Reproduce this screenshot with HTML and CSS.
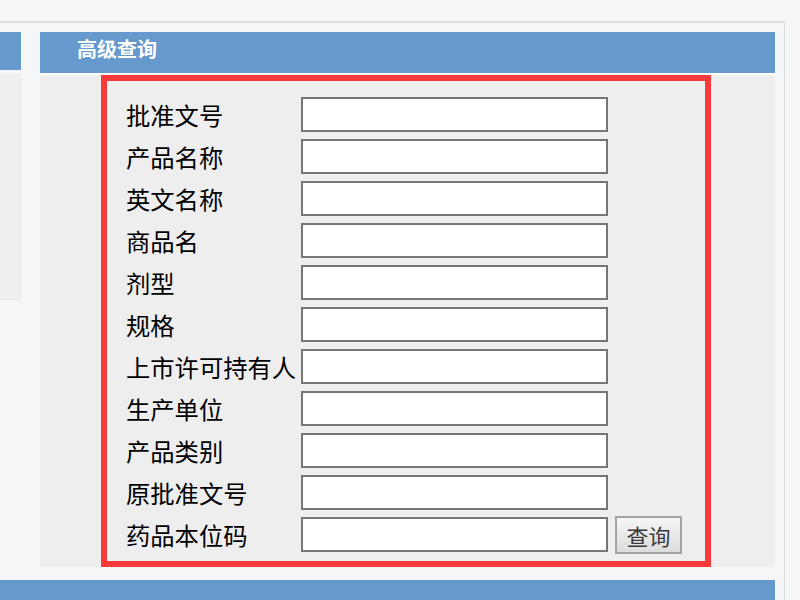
FILE: index.html
```html
<!DOCTYPE html>
<html lang="zh-CN">
<head>
<meta charset="utf-8">
<title>高级查询</title>
<link rel="stylesheet" href="styles.css">
</head>
<body>
<div class="frame">
  <div class="columns">
    <aside class="side">
      <div class="side-head"></div>
      <div class="side-body"></div>
    </aside>
    <section class="main">
      <div class="main-head">高级查询</div>
      <div class="main-body">
        <form class="query">
          <label class="lbl">批准文号</label><input class="fld" type="text"><span></span>
          <label class="lbl">产品名称</label><input class="fld" type="text"><span></span>
          <label class="lbl">英文名称</label><input class="fld" type="text"><span></span>
          <label class="lbl">商品名</label><input class="fld" type="text"><span></span>
          <label class="lbl">剂型</label><input class="fld" type="text"><span></span>
          <label class="lbl">规格</label><input class="fld" type="text"><span></span>
          <label class="lbl">上市许可持有人</label><input class="fld" type="text"><span></span>
          <label class="lbl">生产单位</label><input class="fld" type="text"><span></span>
          <label class="lbl">产品类别</label><input class="fld" type="text"><span></span>
          <label class="lbl">原批准文号</label><input class="fld" type="text"><span></span>
          <label class="lbl">药品本位码</label><input class="fld" type="text"><button class="btn" type="button">查询</button>
        </form>
      </div>
    </section>
  </div>
  <div class="foot-bar"></div>
</div>
</body>
</html>
```

FILE: styles.css
```css
html, body {
  margin: 0;
  padding: 0;
  background: #f5f6f8;
  overflow: hidden;
  height: 600px;
}

.frame {
  margin-top: 21px;
  width: 785px;
  border-top: 2px solid #dcdee1;
  border-right: 1px solid #dcdee1;
  padding-top: 9px;
  height: 600px;
  box-sizing: border-box;
}

.columns {
  display: flex;
  gap: 19px;
}

.side {
  width: 21px;
  flex: none;
}

.side-head {
  height: 38px;
  background: #6699cc;
}

.side-body {
  margin-top: 4px;
  height: 226px;
  background: #efefef;
  border-right: 1px solid #e6e7e8;
  border-bottom: 1px solid #e6e7e8;
  box-sizing: border-box;
}

.main {
  width: 735px;
  flex: none;
}

.main-head {
  height: 41px;
  background: #6699cc;
  color: #ffffff;
  font-family: "Noto Sans CJK SC", "Noto Sans", sans-serif;
  font-weight: bold;
  font-size: 20px;
  line-height: 33px;
  padding-left: 37px;
  box-sizing: border-box;
}

.main-body {
  border-top: 2px solid #ffffff;
  background: #eeeeee;
  height: 492px;
  padding-left: 61px;
}

.query {
  margin: 0;
  width: 610px;
  height: 492px;
  box-sizing: border-box;
  border: 6px solid #f53a3a;
  padding: 16px 0 0 19px;
  display: grid;
  grid-template-columns: 169px 307px auto;
  grid-auto-rows: 35px;
  row-gap: 7px;
  column-gap: 6px;
  align-items: center;
  align-content: start;
  justify-content: start;
}

.lbl {
  font-family: "Noto Sans CJK SC", "Noto Sans", sans-serif;
  font-size: 24.3px;
  line-height: 35px;
  color: #000000;
  white-space: nowrap;
}

.fld {
  width: 307px;
  height: 35px;
  box-sizing: border-box;
  border: 2px solid #767676;
  background: #ffffff;
  margin: 0;
  padding: 0 4px;
}

.btn {
  width: 67px;
  height: 38px;
  margin: 0 0 0 1px;
  padding: 0;
  box-sizing: border-box;
  border: 2px solid #a3a3a3;
  background: linear-gradient(#f6f6f6, #dcdcdc);
  color: #3a3a3a;
  font-family: "Noto Sans CJK SC", "Noto Sans", sans-serif;
  font-size: 22px;
  line-height: 32px;
  align-self: center;
}

.foot-bar {
  margin-top: 13px;
  width: 775px;
  height: 40px;
  background: #6699cc;
}
```
